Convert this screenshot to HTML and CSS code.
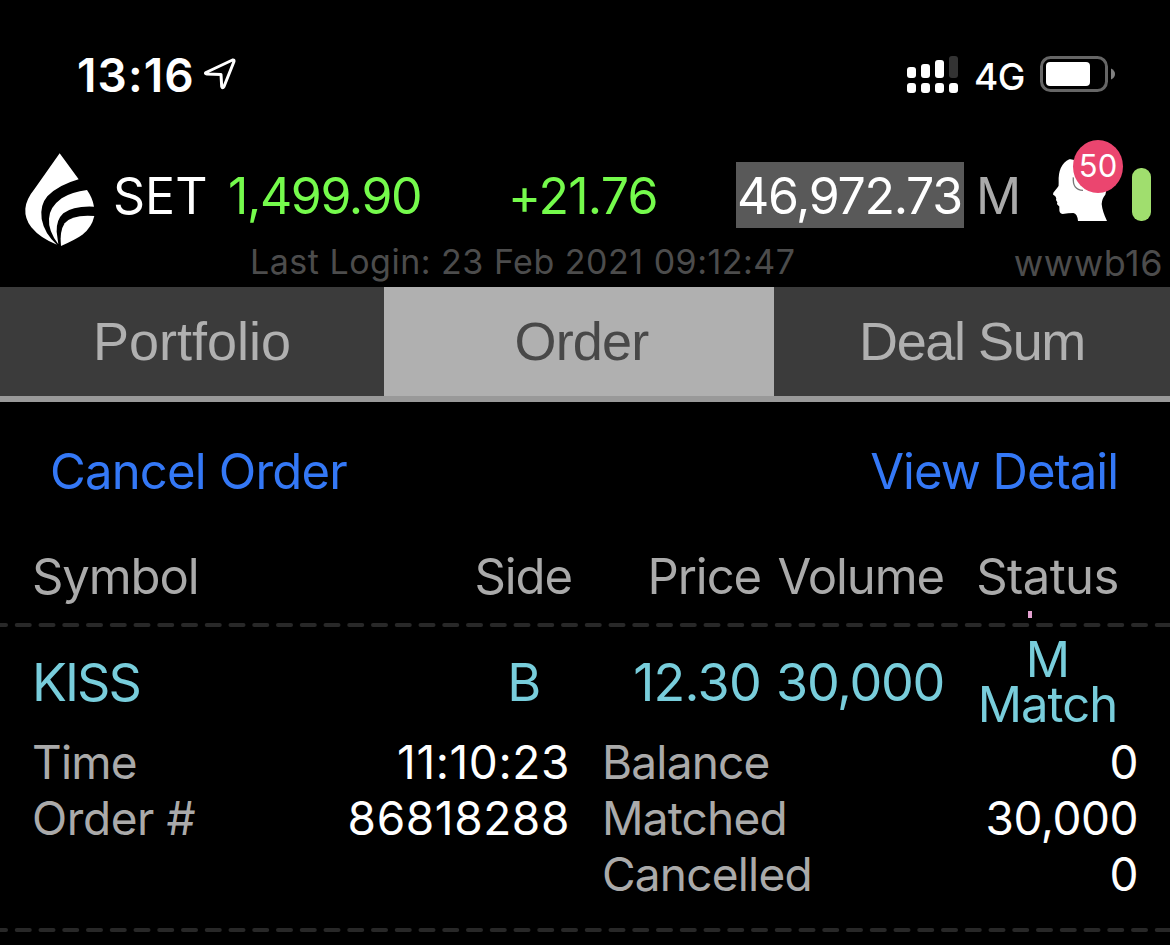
FILE: index.html
```
<!DOCTYPE html>
<html lang="en">
<head>
    <meta charset="UTF-8">
    <meta name="viewport" content="width=device-width, initial-scale=1.0">
    <title>Order</title>
    <link rel="stylesheet" href="styles.css">
</head>
<body>

    <!-- Status bar -->
    <div class="status-bar">
        <span class="clock">13:16</span>
        <svg class="location" width="34" height="36" viewBox="0 0 34 36">
            <path d="M3 15.5 L29.5 3 Q31.3 2.5 31 4.5 L21 29.5 Q19.5 32 18.7 29.5 L18 17.5 L4 17 Q1.5 16.5 3 15.5 Z" fill="none" stroke="#fff" stroke-width="3" stroke-linejoin="round"/>
        </svg>
        <svg class="signal" width="52" height="38" viewBox="0 0 52 38">
            <g fill="#fff">
                <rect x="0" y="11" width="9" height="11" rx="3"/>
                <rect x="14" y="8" width="9" height="14" rx="3"/>
                <rect x="28" y="4" width="9" height="18" rx="3"/>
                <rect x="0" y="27" width="9" height="10" rx="3"/>
                <rect x="14" y="27" width="9" height="10" rx="3"/>
                <rect x="28" y="27" width="9" height="10" rx="3"/>
                <rect x="42" y="27" width="9" height="10" rx="3"/>
            </g>
            <rect x="42" y="0" width="9" height="22" rx="3" fill="#333"/>
        </svg>
        <span class="network">4G</span>
        <svg class="battery" width="76" height="36" viewBox="0 0 76 36">
            <rect x="1.5" y="1.5" width="65" height="33" rx="9" fill="none" stroke="#666" stroke-width="3"/>
            <rect x="6" y="6" width="44" height="24" rx="4" fill="#fff"/>
            <path d="M71 12.5 Q75 14.5 75 18 Q75 21.500 71 23.500 Z" fill="#808080"/>
        </svg>
    </div>

    <!-- Market quote -->
    <div class="quote">
        <svg class="logo" width="72" height="94" viewBox="72 68 216 282">
            <g fill="#fff">
                <path d="M179 69 L236 147 Q175 164 142 198 Q119 225 125 266 Q133 310 171 343 Q122 325 94 291 Q74 265 76 235 Q78 207 104 175 Z"/>
                <path d="M261 179 Q278 203 282 229 Q220 226 190 249 Q169 268 170 304 L175 342 Q144 300 147 265 Q149 230 185 204 Q216 184 261 179 Z"/>
                <path d="M283 257 Q275 292 247 313 Q231 325 183 347 Q178 303 194 279 Q215 252 283 257 Z"/>
            </g>
        </svg>
        <span class="market">SET</span>
        <span class="index-value up">1,499.90</span>
        <span class="index-change up">+21.76</span>
        <span class="turnover">46,972.73</span>
        <span class="unit">M</span>
        <div class="alerts">
            <svg width="56" height="64" viewBox="158 84 168 192">
                <path d="M210 88 Q222 86 236 96 Q300 90 322 140 Q323 178 318 194 Q308 205 307 222 Q309 244 323 273 L236 273 Q234 251 222 249 Q207 249 190 252 Q179 250 180 236 Q182 229 176 226 Q171 223 174 217 L170 210 Q173 202 164 196 Q159 194 162 188 L175 172 Q179 168 178 158 Q175 105 210 88 Z" fill="#fff"/>
                <path d="M222 142 Q219 180 251 181" fill="none" stroke="#777" stroke-width="4"/>
            </svg>
            <span class="badge">50</span>
        </div>
        <div class="connection"></div>
    </div>
    <div class="login-info">
        <span class="last-login">Last Login: 23 Feb 2021 09:12:47</span>
        <span class="server">wwwb16</span>
    </div>

    <!-- Tabs -->
    <nav class="tabs">
        <div class="tab">Portfolio</div>
        <div class="tab active">Order</div>
        <div class="tab deal-sum">Deal Sum</div>
    </nav>

    <div class="actions">
        <a class="cancel">Cancel Order</a>
        <a class="view">View Detail</a>
    </div>

    <!-- Order list -->
    <div class="order-row heading">
        <span class="symbol">Symbol</span>
        <span class="side">Side</span>
        <span class="price">Price</span>
        <span class="volume">Volume</span>
        <span class="status">Status<i class="mark"></i></span>
    </div>
    <svg class="dashes" width="1170" height="5"><line x1="-7" y1="2" x2="1180" y2="2"/></svg>
    <div class="order-row order">
        <span class="symbol">KISS</span>
        <span class="side">B</span>
        <span class="price">12.30</span>
        <span class="volume">30,000</span>
        <div class="status">
            <div>M</div>
            <div>Match</div>
        </div>
    </div>
    <div class="details">
        <div class="detail-col">
            <div class="detail"><span>Time</span><b class="wide">11:10:23</b></div>
            <div class="detail"><span class="order-no">Order #</span><b class="wide">86818288</b></div>
        </div>
        <div class="detail-col">
            <div class="detail"><span>Balance</span><b>0</b></div>
            <div class="detail"><span>Matched</span><b>30,000</b></div>
            <div class="detail"><span>Cancelled</span><b>0</b></div>
        </div>
    </div>
    <svg class="dashes" width="1170" height="5"><line x1="-7" y1="2" x2="1180" y2="2"/></svg>

</body>
</html>
```
FILE: styles.css
```
* {
    box-sizing: border-box;
}

body {
    margin: 0;
    width: 1170px;
    height: 945px;
    overflow: hidden;
    background-color: #000;
    color: #fff;
    font-family: 'Inter', sans-serif;
    white-space: nowrap;
}

svg {
    display: block;
    flex: none;
}

/* Status bar */
.status-bar {
    display: flex;
    align-items: center;
    height: 150px;
    padding-left: 77px;
}

.clock {
    width: 126px;
    font-size: 46px;
    font-weight: 600;
    letter-spacing: 1.1px;
}

.location {
    margin-right: 670px;
}

.network {
    width: 66px;
    margin-left: 15px;
    padding-top: 2px;
    font-size: 37px;
    font-weight: 500;
    letter-spacing: -0.5px;
}

.battery {
    margin-top: -2px;
}

/* Market quote */
.quote {
    display: flex;
    align-items: center;
    height: 90px;
    padding-left: 24px;
    font-size: 50px;
    line-height: 66px;
}

.logo {
    margin: 9px 17px 0 0;
}

.market,
.index-value,
.index-change,
.unit {
    padding-top: 1px;
}

.market {
    width: 115px;
}

.index-value {
    width: 280px;
    letter-spacing: -1.4px;
}

.index-change {
    width: 228px;
    letter-spacing: -0.8px;
}

.up {
    color: #75fb4c;
}

.turnover {
    width: 228px;
    height: 66px;
    padding-left: 1px;
    background-color: #595959;
    line-height: 68px;
    letter-spacing: -1.3px;
}

.unit {
    width: 77px;
    padding-left: 12px;
    color: #aaa;
}

.alerts {
    position: relative;
    margin: -10px 0 0 11px;
    width: 80px;
    height: 64px;
}

.badge {
    position: absolute;
    left: 21px;
    top: -18px;
    width: 50px;
    height: 53px;
    border-radius: 50%;
    background-color: #eb456f;
    font-size: 31px;
    line-height: 51px;
    text-align: center;
}

.connection {
    width: 19px;
    height: 53px;
    margin-top: -1px;
    border-radius: 9px;
    background-color: #a0de6e;
}

.login-info {
    display: flex;
    justify-content: space-between;
    height: 47px;
    padding: 0 7px 0 250px;
    color: #4c4c4c;
    font-size: 34px;
    line-height: 44px;
    letter-spacing: 0.5px;
}

.server {
    font-size: 36px;
    line-height: 46px;
}

/* Tabs */
.tabs {
    display: grid;
    grid-template-columns: 384px 390px 396px;
    height: 115px;
    border-bottom: 6px solid #999;
    font-family: 'Liberation Sans', Arial, sans-serif;
    font-size: 54px;
    line-height: 109px;
    text-align: center;
}

.tab {
    background-color: #3b3b3b;
    color: #b0b0b0;
}

.tab.active {
    padding-left: 5px;
    background-color: #b0b0b0;
    color: #484848;
    letter-spacing: -0.8px;
}

.deal-sum {
    letter-spacing: -1.4px;
}

.actions {
    display: flex;
    justify-content: space-between;
    height: 138px;
    padding: 0 52px 0 50px;
    color: #3478f6;
    font-size: 49px;
    line-height: 140px;
    letter-spacing: -0.8px;
}

.view {
    letter-spacing: -1px;
}

/* Order list */
.order-row {
    display: grid;
    grid-template-columns: 411px 129px 189px 183px 207px;
    align-items: center;
    padding-left: 32px;
}

.side,
.price,
.volume {
    text-align: right;
}

.heading {
    height: 83px;
    align-items: start;
    color: #aaa;
    font-size: 49px;
    line-height: 73px;
    letter-spacing: -1.1px;
}

.status {
    position: relative;
    text-align: center;
}

.heading .status {
    letter-spacing: -0.6px;
}

.mark {
    position: absolute;
    left: 84px;
    top: 71px;
    width: 4px;
    height: 7px;
    background-color: #e3a0cf;
}

.order {
    height: 106px;
    padding-top: 2px;
    color: #78cddb;
    font-size: 52px;
    letter-spacing: -1.3px;
}

.order .symbol {
    letter-spacing: -1.9px;
}

.order .side {
    padding-right: 32px;
}

.order .price {
    letter-spacing: -0.7px;
}

.order .status {
    font-size: 49px;
    line-height: 45px;
    letter-spacing: -1px;
}

.dashes line {
    stroke: #282828;
    stroke-width: 4;
    stroke-linecap: round;
    stroke-dasharray: 13 10.75;
}

.details {
    display: grid;
    grid-template-columns: 538px 536px;
    column-gap: 32px;
    height: 194px;
    padding-left: 32px;
    font-size: 46px;
    line-height: 56px;
}

.detail {
    display: flex;
    justify-content: space-between;
}

.detail span {
    color: #aaa;
    letter-spacing: -0.8px;
}

.detail .order-no {
    letter-spacing: -0.4px;
}

.detail b {
    font-weight: 400;
    letter-spacing: -0.5px;
}

.detail .wide {
    letter-spacing: 0.6px;
}
```
